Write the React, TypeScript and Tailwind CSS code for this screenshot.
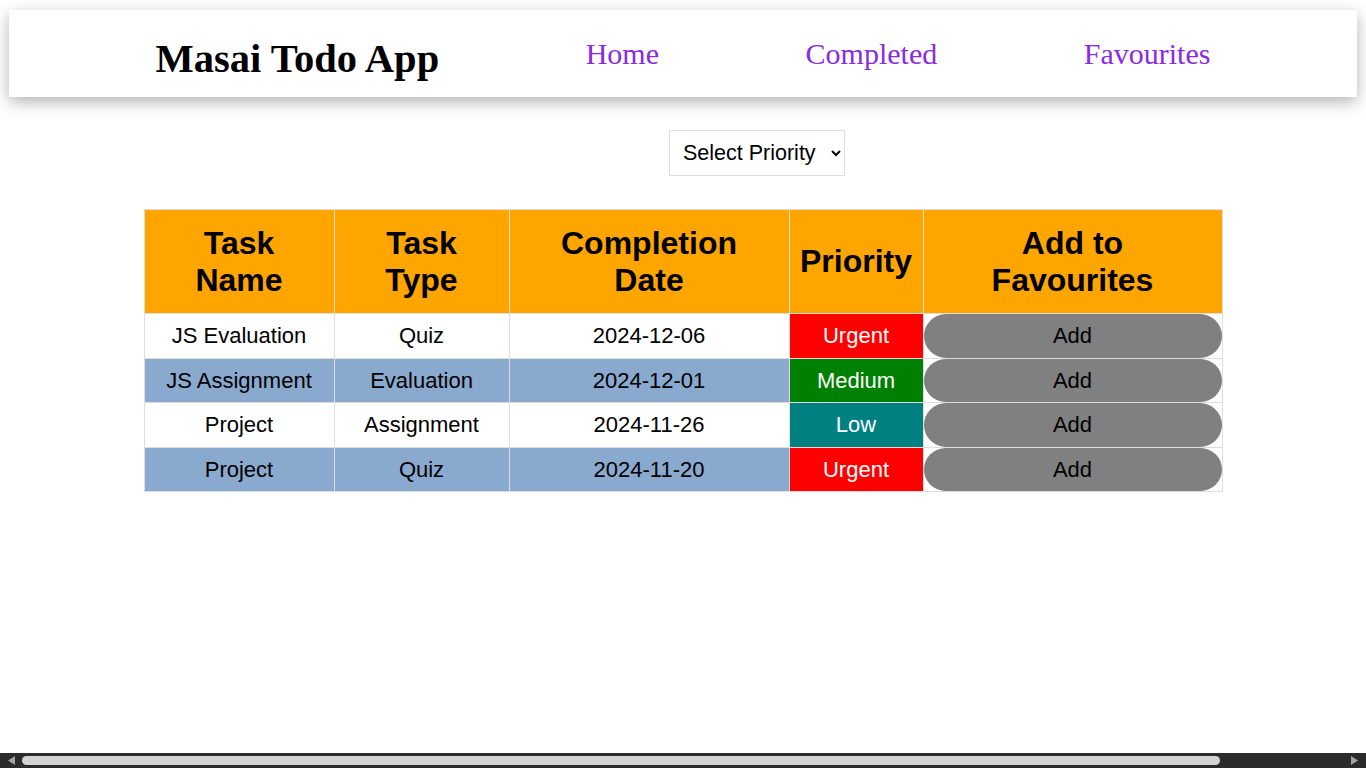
import React from 'react';

interface Task {
  name: string;
  type: string;
  date: string;
  priority: 'Urgent' | 'Medium' | 'Low';
}

const tasks: Task[] = [
  { name: 'JS Evaluation', type: 'Quiz', date: '2024-12-06', priority: 'Urgent' },
  { name: 'JS Assignment', type: 'Evaluation', date: '2024-12-01', priority: 'Medium' },
  { name: 'Project', type: 'Assignment', date: '2024-11-26', priority: 'Low' },
  { name: 'Project', type: 'Quiz', date: '2024-11-20', priority: 'Urgent' },
];

const priorityColor: Record<Task['priority'], string> = {
  Urgent: 'bg-[#ff0000]',
  Medium: 'bg-[#008000]',
  Low: 'bg-[#008080]',
};

function Navbar() {
  return (
    <nav className="ml-[9px] mt-[10px] flex h-[87px] w-[1348px] items-start justify-evenly bg-white pt-[27px] shadow-[0_5px_15px_rgba(0,0,0,0.3)] font-['Liberation_Serif',serif]">
      <h1 className="text-[40.5px] font-bold leading-[44px] text-black">Masai Todo App</h1>
      <a className="text-[30px] leading-[33px] text-[#8a2be2]" href="#">
        Home
      </a>
      <a className="text-[30px] leading-[33px] text-[#8a2be2]" href="#">
        Completed
      </a>
      <a className="text-[30px] leading-[33px] text-[#8a2be2]" href="#">
        Favourites
      </a>
    </nav>
  );
}

function ScrollBar() {
  return (
    <div className="fixed bottom-0 left-0 flex h-[15px] w-full items-center bg-[#2b2b2b]">
      <svg className="ml-[8px] h-[9px] w-[7px]" viewBox="0 0 7 9">
        <path d="M7 0 L0 4.5 L7 9 Z" fill="#a3a3a3" />
      </svg>
      <div className="ml-[7px] h-[9px] w-[1198px] rounded-full bg-[#d3d3d3]" />
      <svg className="ml-[131px] h-[9px] w-[7px]" viewBox="0 0 7 9">
        <path d="M0 0 L7 4.5 L0 9 Z" fill="#a3a3a3" />
      </svg>
    </div>
  );
}

export default function App() {
  return (
    <div className="h-screen w-full overflow-x-auto overflow-y-hidden bg-white font-['Liberation_Sans',Arial,sans-serif]">
      <div className="w-[1514px]">
        <Navbar />

        {/* Priority filter */}
        <div className="mt-[33px] flex w-[1514px] justify-center">
          <select className="h-[46px] w-[176px] border border-solid border-[#dddddd] bg-white pl-[9px] pr-[6px] text-[21.5px] text-black">
            <option>Select Priority</option>
            <option>Urgent</option>
            <option>Medium</option>
            <option>Low</option>
          </select>
        </div>

        {/* Task table */}
        <div className="mt-[33px] flex w-[1366px] justify-center">
          <table className="w-[1078px] table-fixed border-collapse border border-[#dddddd] text-center text-[22px] text-black">
            <colgroup>
              <col className="w-[190px]" />
              <col className="w-[175px]" />
              <col className="w-[280px]" />
              <col className="w-[134px]" />
              <col className="w-[299px]" />
            </colgroup>
            <thead>
              <tr className="h-[104px] bg-[#ffa500] text-[32px] font-bold leading-[37px]">
                <th className="border border-[#dddddd]">
                  Task
                  <br />
                  Name
                </th>
                <th className="border border-[#dddddd]">
                  Task
                  <br />
                  Type
                </th>
                <th className="border border-[#dddddd]">
                  Completion
                  <br />
                  Date
                </th>
                <th className="border border-[#dddddd]">Priority</th>
                <th className="border border-[#dddddd]">
                  Add to
                  <br />
                  Favourites
                </th>
              </tr>
            </thead>
            <tbody>
              {tasks.map((task, index) => (
                <tr key={index} className={`h-[44.5px] ${index % 2 === 1 ? 'bg-[#8aa9cf]' : 'bg-white'}`}>
                  <td className="border border-[#dddddd]">{task.name}</td>
                  <td className="border border-[#dddddd]">{task.type}</td>
                  <td className="border border-[#dddddd]">{task.date}</td>
                  <td className={`border border-[#dddddd] text-white ${priorityColor[task.priority]}`}>
                    {task.priority}
                  </td>
                  <td className="border border-[#dddddd] bg-white p-0">
                    <button className="h-[43.5px] w-full rounded-[22px] bg-[#808080] text-[22px] text-black">
                      Add
                    </button>
                  </td>
                </tr>
              ))}
            </tbody>
          </table>
        </div>
      </div>

      <ScrollBar />
    </div>
  );
}
